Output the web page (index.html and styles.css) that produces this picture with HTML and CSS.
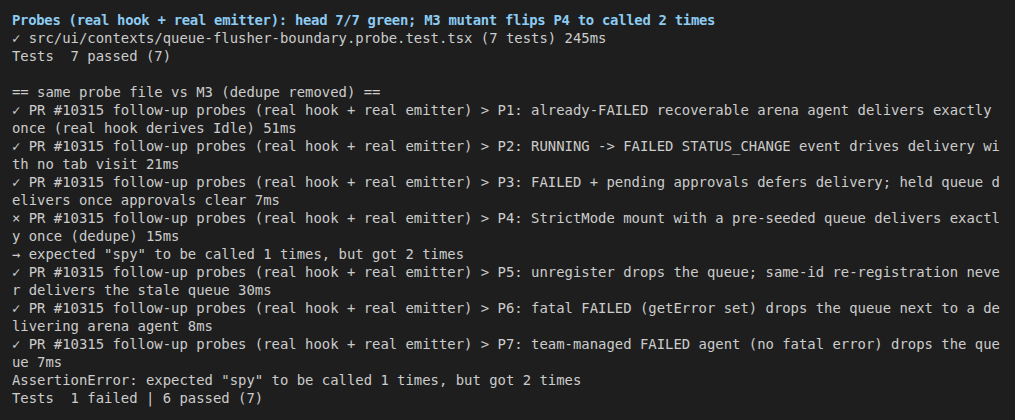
FILE: index.html
```html
<!DOCTYPE html>
<html lang="en">
<head>
<meta charset="utf-8">
<title>Probe output</title>
<link rel="stylesheet" href="styles.css">
</head>
<body>
<main class="term">
<div class="line head">Probes (real hook + real emitter): head 7/7 green; M3 mutant flips P4 to called 2 times</div>
<div class="line">✓ src/ui/contexts/queue-flusher-boundary.probe.test.tsx (7 tests) 245ms</div>
<div class="line">Tests  7 passed (7)</div>
<div class="line"> </div>
<div class="line">== same probe file vs M3 (dedupe removed) ==</div>
<div class="line">✓ PR #10315 follow-up probes (real hook + real emitter) &gt; P1: already-FAILED recoverable arena agent delivers exactly </div>
<div class="line">once (real hook derives Idle) 51ms</div>
<div class="line">✓ PR #10315 follow-up probes (real hook + real emitter) &gt; P2: RUNNING -&gt; FAILED STATUS_CHANGE event drives delivery wi</div>
<div class="line">th no tab visit 21ms</div>
<div class="line">✓ PR #10315 follow-up probes (real hook + real emitter) &gt; P3: FAILED + pending approvals defers delivery; held queue d</div>
<div class="line">elivers once approvals clear 7ms</div>
<div class="line">× PR #10315 follow-up probes (real hook + real emitter) &gt; P4: StrictMode mount with a pre-seeded queue delivers exactl</div>
<div class="line">y once (dedupe) 15ms</div>
<div class="line">→ expected "spy" to be called 1 times, but got 2 times</div>
<div class="line">✓ PR #10315 follow-up probes (real hook + real emitter) &gt; P5: unregister drops the queue; same-id re-registration neve</div>
<div class="line">r delivers the stale queue 30ms</div>
<div class="line">✓ PR #10315 follow-up probes (real hook + real emitter) &gt; P6: fatal FAILED (getError set) drops the queue next to a de</div>
<div class="line">livering arena agent 8ms</div>
<div class="line">✓ PR #10315 follow-up probes (real hook + real emitter) &gt; P7: team-managed FAILED agent (no fatal error) drops the que</div>
<div class="line">ue 7ms</div>
<div class="line">AssertionError: expected "spy" to be called 1 times, but got 2 times</div>
<div class="line">Tests  1 failed | 6 passed (7)</div>
</main>
</body>
</html>
```

FILE: styles.css
```css
html, body {
  margin: 0;
  padding: 0;
  background: #1e1e1e;
}
.term {
  padding: 11px 12px;
  font-family: "DejaVu Sans Mono", monospace;
  font-size: 13.92px;
  line-height: 18px;
  color: #cccccc;
}
.line {
  white-space: pre;
  height: 18px;
}
.head {
  color: #8ccbf2;
  font-weight: bold;
  letter-spacing: -0.29px;
}
```
